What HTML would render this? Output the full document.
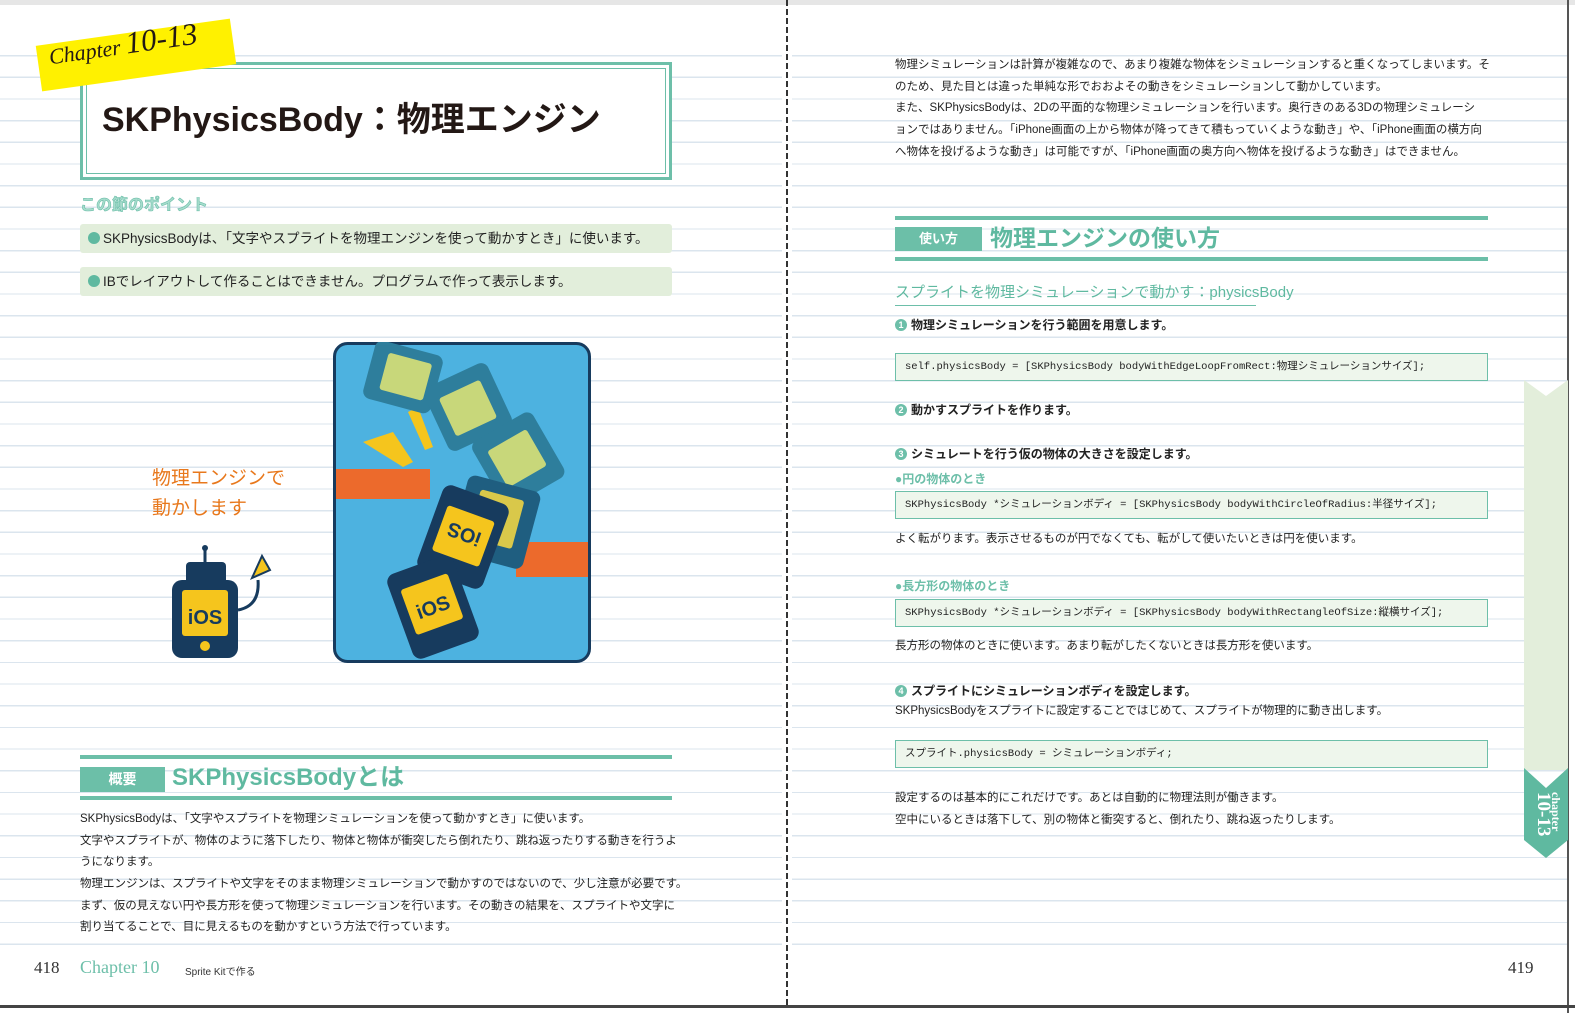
<!DOCTYPE html>
<html><head><meta charset="utf-8">
<style>
*{margin:0;padding:0;box-sizing:border-box}
body{width:1575px;height:1013px;position:relative;overflow:hidden;background:#fff;font-family:"Liberation Sans","Noto Sans CJK JP",sans-serif;color:#222}
.ruled{position:absolute;top:55px;height:890px;background:repeating-linear-gradient(to bottom,#dbe5ee 0,#dbe5ee 1.3px,transparent 1.3px,transparent 21.67px)}
.a{position:absolute;white-space:nowrap}
.t{font-size:11.5px;line-height:21.67px}
.code{position:absolute;left:895px;width:593px;height:28px;background:#eef6ec;border:1px solid #6dbfa9;font-family:"Liberation Mono","Noto Sans CJK JP",monospace;font-size:10.5px;line-height:26px;padding-left:9px;color:#222}
.step{font-size:12px;font-weight:bold;line-height:20px}
.num{display:inline-block;width:12px;height:12px;border-radius:50%;background:#6dbfa9;color:#fff;font-size:9px;line-height:12px;text-align:center;vertical-align:1px;margin-right:4px}
.pt{position:absolute;left:80px;width:592px;height:29px;background:#e2eedb;border-radius:3px;font-size:13.5px;line-height:29px;padding-left:8px}
.pt b{display:inline-block;width:12px;height:12px;border-radius:50%;background:#5fb9a0;vertical-align:-1px;margin-right:3px}
.bar{position:absolute;background:#6cbfa8}
</style></head><body>
<div style="position:absolute;left:0;top:0;width:1575px;height:5px;background:#e6e6e6"></div>
<div class="ruled" style="left:0;width:782px"></div>
<div class="ruled" style="left:792px;width:775px"></div>
<div style="position:absolute;left:786px;top:0;width:2px;height:1005px;background:repeating-linear-gradient(to bottom,#333 0,#333 6px,transparent 6px,transparent 9px)"></div>
<div style="position:absolute;left:1567px;top:0;width:2px;height:1013px;background:#555"></div>
<div style="position:absolute;left:0;top:1005px;width:1575px;height:3px;background:#444"></div>

<div style="position:absolute;left:80px;top:62px;width:592px;height:118px;border:3px solid #6dbfa9;background:#fff"></div>
<div style="position:absolute;left:86px;top:68px;width:580px;height:106px;border:1.5px solid #6dbfa9"></div>
<div class="a" style="left:102px;top:98px;font-size:34px;font-weight:bold;color:#231815;line-height:44px">SKPhysicsBody：物理エンジン</div>
<div style="position:absolute;left:38px;top:32px;width:196px;height:46px;background:#fff100;transform:rotate(-8deg)"></div>
<div class="a" style="left:48px;top:26px;transform:rotate(-8deg);font-family:'Liberation Serif',serif;font-style:italic;color:#231815"><span style="font-size:22px">Chapter </span><span style="font-size:31px">10-13</span></div>

<div class="a" style="left:80px;top:195px;font-size:16px;font-weight:bold;color:#a7dccd;-webkit-text-stroke:0.6px #6dbfa9;line-height:22px">この節のポイント</div>
<div class="pt" style="top:224px"><b></b>SKPhysicsBodyは、「文字やスプライトを物理エンジンを使って動かすとき」に使います。</div>
<div class="pt" style="top:267px"><b></b>IBでレイアウトして作ることはできません。プログラムで作って表示します。</div>

<div class="a" style="left:152px;top:464px;font-size:19px;color:#e8781c;line-height:30px">物理エンジンで<br>動かします</div>
<svg style="position:absolute;left:160px;top:540px" width="120" height="125" viewBox="0 0 120 125">
<line x1="45" y1="10" x2="45" y2="25" stroke="#173b5e" stroke-width="3"/><circle cx="45" cy="8" r="3" fill="#173b5e"/>
<rect x="26" y="22" width="40" height="22" rx="4" fill="#173b5e"/>
<rect x="12" y="40" width="66" height="78" rx="10" fill="#173b5e"/>
<rect x="22" y="50" width="46" height="46" rx="3" fill="#f5c51d"/>
<text x="45" y="84" font-size="20" font-weight="bold" text-anchor="middle" fill="#173b5e" font-family="Liberation Sans">iOS</text>
<circle cx="45" cy="106" r="5" fill="#f5c51d"/>
<path d="M78 70 Q100 66 98 40" stroke="#173b5e" stroke-width="3" fill="none"/>
<path d="M92 38 L102 16 L110 30 Z" fill="#f5c51d" stroke="#173b5e" stroke-width="2"/>
</svg>
<svg style="position:absolute;left:333px;top:342px" width="258" height="321" viewBox="0 0 258 321">
<rect x="1.5" y="1.5" width="255" height="318" rx="13" fill="#4db2e0" stroke="#173b5e" stroke-width="3"/>
<rect x="3" y="127" width="94" height="30" fill="#ec6a2c"/>
<rect x="183" y="200" width="72" height="35" fill="#ec6a2c"/>
<path d="M30 100 L60 90 L80 120 L70 125Z M75 70 L85 65 L100 105 L92 108Z" fill="#f5c51d"/>
<g fill="#2e7e9c"><rect x="35" y="5" width="70" height="60" rx="8" transform="rotate(15 70 35)"/><rect x="100" y="30" width="70" height="70" rx="8" transform="rotate(-25 135 65)"/><rect x="150" y="80" width="70" height="75" rx="8" transform="rotate(-30 185 117)"/></g>
<g fill="#c8d77a"><rect x="50" y="15" width="45" height="38" rx="3" transform="rotate(15 70 35)"/><rect x="112" y="45" width="45" height="42" rx="3" transform="rotate(-25 135 65)"/><rect x="162" y="95" width="45" height="42" rx="3" transform="rotate(-30 185 117)"/></g>
<g fill="#1f5e80"><rect x="125" y="140" width="75" height="80" rx="8" transform="rotate(15 162 180)"/></g>
<rect x="140" y="152" width="45" height="50" rx="3" fill="#d9c84a" transform="rotate(15 162 180)"/>
<g fill="#173b5e"><rect x="95" y="150" width="70" height="90" rx="9" transform="rotate(20 130 195)"/><rect x="65" y="220" width="70" height="90" rx="9" transform="rotate(-20 100 265)"/></g>
<g fill="#f5c51d"><rect x="105" y="170" width="50" height="48" rx="3" transform="rotate(20 130 195)"/><rect x="75" y="238" width="50" height="48" rx="3" transform="rotate(-20 100 265)"/></g>
<text x="130" y="205" font-size="20" font-weight="bold" text-anchor="middle" fill="#173b5e" transform="rotate(200 130 195)" font-family="Liberation Sans">iOS</text>
<text x="100" y="272" font-size="20" font-weight="bold" text-anchor="middle" fill="#173b5e" transform="rotate(-20 100 265)" font-family="Liberation Sans">iOS</text>
</svg>

<div class="bar" style="left:80px;top:755px;width:592px;height:4px"></div>
<div class="bar" style="left:80px;top:767px;width:85px;height:25px;color:#fff;font-size:14px;font-weight:bold;text-align:center;line-height:25px">概要</div>
<div class="a" style="left:172px;top:762px;font-size:24px;font-weight:bold;color:#5fb9a0;line-height:32px">SKPhysicsBodyとは</div>
<div class="bar" style="left:80px;top:796px;width:592px;height:4px"></div>
<div class="a t" style="left:80px;top:809px">SKPhysicsBodyは、「文字やスプライトを物理シミュレーションを使って動かすとき」に使います。<br>文字やスプライトが、物体のように落下したり、物体と物体が衝突したら倒れたり、跳ね返ったりする動きを行うよ<br>うになります。<br>物理エンジンは、スプライトや文字をそのまま物理シミュレーションで動かすのではないので、少し注意が必要です。<br>まず、仮の見えない円や長方形を使って物理シミュレーションを行います。その動きの結果を、スプライトや文字に<br>割り当てることで、目に見えるものを動かすという方法で行っています。</div>

<div class="a" style="left:34px;top:958px;font-family:'Liberation Serif',serif;font-size:17px;color:#333">418</div>
<div class="a" style="left:80px;top:957px;font-family:'Liberation Serif',serif;font-size:18px;color:#6dbfa9">Chapter 10</div>
<div class="a" style="left:185px;top:963px;font-size:10px;color:#333">Sprite Kitで作る</div>

<div class="a t" style="left:895px;top:55px">物理シミュレーションは計算が複雑なので、あまり複雑な物体をシミュレーションすると重くなってしまいます。そ<br>のため、見た目とは違った単純な形でおおよその動きをシミュレーションして動かしています。<br>また、SKPhysicsBodyは、2Dの平面的な物理シミュレーションを行います。奥行きのある3Dの物理シミュレーシ<br>ョンではありません。「iPhone画面の上から物体が降ってきて積もっていくような動き」や、「iPhone画面の横方向<br>へ物体を投げるような動き」は可能ですが、「iPhone画面の奥方向へ物体を投げるような動き」はできません。</div>

<div class="bar" style="left:895px;top:216px;width:593px;height:4px"></div>
<div class="bar" style="left:895px;top:227px;width:87px;height:24px;color:#fff;font-size:13px;font-weight:bold;text-align:center;line-height:24px">使い方</div>
<div class="a" style="left:990px;top:223px;font-size:23px;font-weight:bold;color:#5fb9a0;line-height:30px">物理エンジンの使い方</div>
<div class="bar" style="left:895px;top:257px;width:593px;height:4px"></div>

<div class="a" style="left:895px;top:283px;font-size:15px;color:#5fb9a0;line-height:20px">スプライトを物理シミュレーションで動かす：physicsBody</div>
<div style="position:absolute;left:895px;top:305px;width:361px;height:1px;background:#6dbfa9"></div>

<div class="a step" style="left:895px;top:315px"><span class="num">1</span>物理シミュレーションを行う範囲を用意します。</div>
<div class="code" style="top:353px">self.physicsBody = [SKPhysicsBody bodyWithEdgeLoopFromRect:物理シミュレーションサイズ];</div>
<div class="a step" style="left:895px;top:400px"><span class="num">2</span>動かすスプライトを作ります。</div>
<div class="a step" style="left:895px;top:444px"><span class="num">3</span>シミュレートを行う仮の物体の大きさを設定します。</div>
<div class="a" style="left:895px;top:470px;font-size:12px;font-weight:bold;color:#6dbfa9;line-height:18px">●円の物体のとき</div>
<div class="code" style="top:491px">SKPhysicsBody *シミュレーションボディ = [SKPhysicsBody bodyWithCircleOfRadius:半径サイズ];</div>
<div class="a t" style="left:895px;top:529px">よく転がります。表示させるものが円でなくても、転がして使いたいときは円を使います。</div>
<div class="a" style="left:895px;top:577px;font-size:12px;font-weight:bold;color:#6dbfa9;line-height:18px">●長方形の物体のとき</div>
<div class="code" style="top:599px">SKPhysicsBody *シミュレーションボディ = [SKPhysicsBody bodyWithRectangleOfSize:縦横サイズ];</div>
<div class="a t" style="left:895px;top:636px">長方形の物体のときに使います。あまり転がしたくないときは長方形を使います。</div>
<div class="a step" style="left:895px;top:681px"><span class="num">4</span>スプライトにシミュレーションボディを設定します。</div>
<div class="a t" style="left:895px;top:701px">SKPhysicsBodyをスプライトに設定することではじめて、スプライトが物理的に動き出します。</div>
<div class="code" style="top:740px">スプライト.physicsBody = シミュレーションボディ;</div>
<div class="a t" style="left:895px;top:788px">設定するのは基本的にこれだけです。あとは自動的に物理法則が働きます。<br>空中にいるときは落下して、別の物体と衝突すると、倒れたり、跳ね返ったりします。</div>

<svg style="position:absolute;left:1524px;top:380px" width="44" height="480" viewBox="0 0 44 480">
<path d="M0 0 L22 16 L44 0 L44 390 L0 390 Z" fill="#e3eedb"/>
<path d="M0 388 L22 408 L44 388 L44 460 L22 478 L0 460 Z" fill="#5fb9a0"/>
<text transform="translate(14 412) rotate(90)" font-family="Liberation Serif" font-size="19" font-weight="bold" fill="#fff">10-13</text>
<text transform="translate(28 412) rotate(90)" font-family="Liberation Serif" font-size="12" font-weight="bold" fill="#fff">chapter</text>
</svg>

<div class="a" style="left:1508px;top:958px;font-family:'Liberation Serif',serif;font-size:17px;color:#333">419</div>
</body></html>
